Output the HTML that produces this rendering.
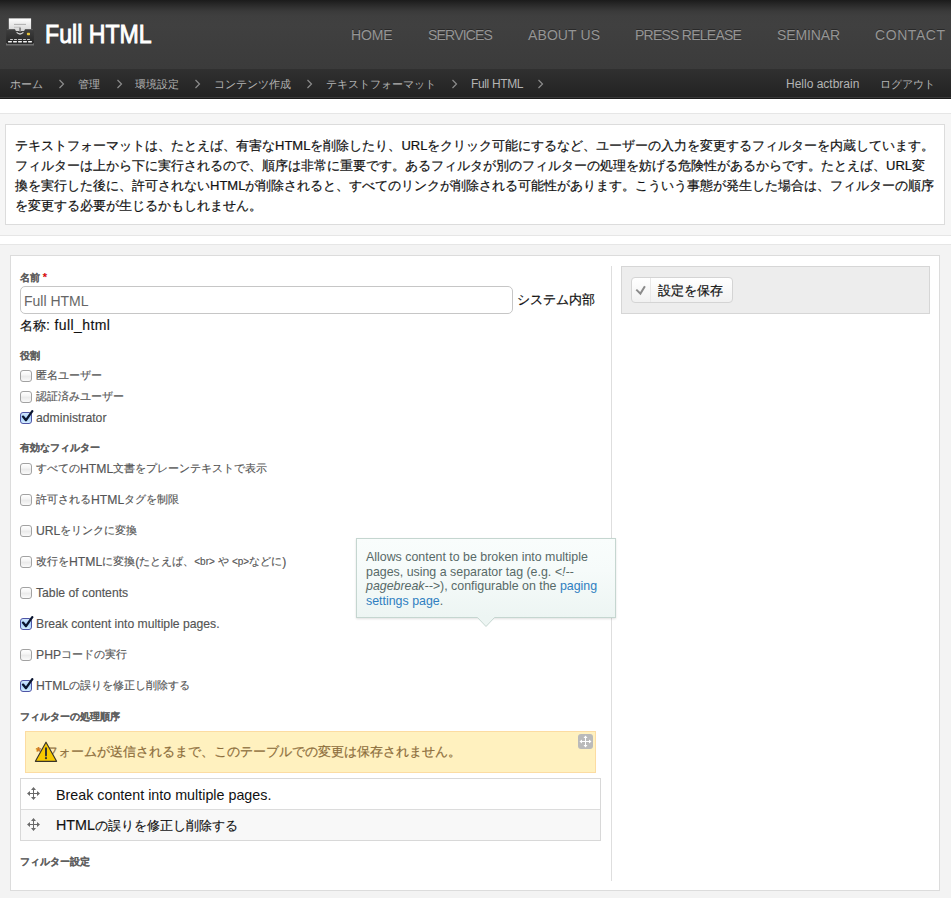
<!DOCTYPE html>
<html><head><meta charset="utf-8">
<style>
*{margin:0;padding:0;box-sizing:border-box}
html,body{width:951px;height:898px;overflow:hidden;background:#fff;font-family:"Liberation Sans",sans-serif}
div,span{white-space:nowrap}
.a{position:absolute}
#hdr{position:absolute;left:0;top:0;width:951px;height:69px;background:linear-gradient(#1b1b1b 0,#2a2a2a 5px,#3a3a3a 11px,#3f3f3f 16px,#404040 25px,#3b3b3b 69px)}
#bc{position:absolute;left:0;top:69px;width:951px;height:30px;background:linear-gradient(#303030 0,#222 28px,#383838 28px,#383838 29px,#1a1a1a 29px,#1a1a1a 30px)}
.nav{position:absolute;top:27px;color:#959595;font-size:14px;line-height:16px;text-shadow:0 -1px 0 rgba(0,0,0,.35)}
.bci{position:absolute;top:77px;color:#b4b4b4;font-size:11px;line-height:14px}
.bcl{position:absolute;top:77px;color:#b4b4b4;font-size:12px;line-height:14px}
.sep{position:absolute;top:79px}
.sec1{position:absolute;left:0;top:113px;width:951px;height:123px;background:#f6f6f6;border-top:1px solid #e6e6e6;border-bottom:1px solid #e6e6e6}
#desc{position:absolute;left:5px;top:124px;width:940px;height:101px;background:#fff;border:1px solid #dcdcdc}
.dl{position:absolute;left:15px;font-size:13px;color:#111;line-height:16px;margin-top:1px;-webkit-text-stroke:0.2px #111}
.sec2{position:absolute;left:0;top:244px;width:951px;height:654px;background:#f3f3f3;border-top:1px solid #e6e6e6}
#form{position:absolute;left:10px;top:255px;width:930px;height:636px;background:#fff;border:1px solid #dcdcdc}
.lbl{position:absolute;left:20px;font-size:10px;font-weight:bold;color:#5f5f5f;line-height:12px;-webkit-text-stroke:0.1px #5f5f5f}
.cb{position:absolute;left:20px;width:12px;height:12px;border:1px solid #a2a2a2;border-radius:3px;background:linear-gradient(#fff 0,#f6f6f6 35%,#ebebeb 55%,#fafafa 100%)}
.ck{position:absolute;left:20px}
.ct{position:absolute;left:36px;font-size:11px;color:#555;line-height:14px;-webkit-text-stroke:0.15px #555}
.l{font-size:12.2px;position:relative;top:1px}
</style></head><body>
<div id="hdr"></div>
<!-- logo -->
<svg class="a" style="left:2px;top:14px" width="36" height="36" viewBox="0 0 36 36">
 <defs><linearGradient id="pg" x1="0" y1="0" x2="0" y2="1"><stop offset="0" stop-color="#fff"/><stop offset="1" stop-color="#d4d4d4"/></linearGradient>
 <linearGradient id="bg" x1="0" y1="0" x2="0" y2="1"><stop offset="0" stop-color="#3e3e3e"/><stop offset="1" stop-color="#262626"/></linearGradient></defs>
 <rect x="6.8" y="4.4" width="22.3" height="12.6" fill="url(#pg)"/>
 <rect x="12" y="9.9" width="12" height="0.9" fill="#a8a8a8"/>
 <rect x="12" y="12.8" width="6.5" height="0.8" fill="#b8b8b8"/>
 <path d="M4.2 16.4 Q4.2 15.2 5.4 15.2 H13 L14.5 18.3 H21.5 L23 15.2 H30.7 Q31.9 15.2 31.9 16.4 V29.7 H4.2 Z" fill="url(#bg)"/>
 <path d="M5 15.6 H12.4 M23.6 15.6 H31" stroke="#5c5c5c" stroke-width="0.9"/>
 <path d="M14.6 18.4 Q18 21.6 21.4 18.4" fill="none" stroke="#d8d8d8" stroke-width="1.3"/>
 <rect x="17.3" y="13.6" width="1.5" height="4.2" fill="#777"/>
 <rect x="24.9" y="18.8" width="3.1" height="2.4" rx="0.6" fill="#e3c23a"/>
 <g fill="#cfcfcf"><rect x="8" y="24.9" width="3" height="1.2" rx=".5"/><rect x="12" y="24.9" width="3" height="1.2" rx=".5"/><rect x="16" y="24.9" width="4" height="1.2" rx=".5"/><rect x="21" y="24.9" width="3" height="1.2" rx=".5"/><rect x="25" y="24.9" width="3" height="1.2" rx=".5"/></g>
 <g fill="#f4f4f4"><rect x="6" y="27" width="4" height="1.4" rx=".6"/><rect x="11" y="27" width="4" height="1.4" rx=".6"/><rect x="16" y="27" width="4" height="1.4" rx=".6"/><rect x="21" y="27" width="4" height="1.4" rx=".6"/><rect x="26" y="27" width="4" height="1.4" rx=".6"/></g>
 <path d="M4 29.2 V31.4 H32 V29.2 H31 V30 H5 V29.2 Z" fill="#6e6e6e"/>
</svg>
<div class="a" style="left:45px;top:19px;font-size:26px;color:#fff;line-height:30px;-webkit-text-stroke:0.9px #fff;transform:scaleX(0.89);transform-origin:0 0">Full HTML</div>
<div class="nav" style="left:351px;letter-spacing:-0.15px">HOME</div>
<div class="nav" style="left:428px;letter-spacing:-0.8px">SERVICES</div>
<div class="nav" style="left:528px;letter-spacing:0.1px">ABOUT US</div>
<div class="nav" style="left:635px;letter-spacing:-0.75px">PRESS RELEASE</div>
<div class="nav" style="left:777px;letter-spacing:-0.13px">SEMINAR</div>
<div class="nav" style="left:875px;letter-spacing:0.57px">CONTACT</div>

<div id="bc"></div>
<div class="bci" style="left:10px">ホーム</div>
<div class="bci" style="left:78px">管理</div>
<div class="bci" style="left:135px">環境設定</div>
<div class="bci" style="left:214px">コンテンツ作成</div>
<div class="bci" style="left:326px">テキストフォーマット</div>
<div class="bcl" style="left:471px;letter-spacing:-0.35px">Full HTML</div>
<div class="bcl" style="left:786px">Hello actbrain</div>
<div class="bci" style="left:880px">ログアウト</div>
<svg class="sep" style="left:0" width="951" height="12" viewBox="0 0 951 12">
 <g fill="none" stroke="#8c8c8c" stroke-width="1.2">
 <path d="M59.5 1 L63.5 5 L59.5 9"/><path d="M117.5 1 L121.5 5 L117.5 9"/><path d="M195.5 1 L199.5 5 L195.5 9"/><path d="M307.5 1 L311.5 5 L307.5 9"/><path d="M452.5 1 L456.5 5 L452.5 9"/><path d="M538.5 1 L542.5 5 L538.5 9"/>
 </g></svg>

<div class="sec1"></div>
<div id="desc"></div>
<div class="dl" style="top:137px">テキストフォーマットは、たとえば、有害なHTMLを削除したり、URLをクリック可能にするなど、ユーザーの入力を変更するフィルターを内蔵しています。</div>
<div class="dl" style="top:157px">フィルターは上から下に実行されるので、順序は非常に重要です。あるフィルタが別のフィルターの処理を妨げる危険性があるからです。たとえば、URL変</div>
<div class="dl" style="top:177px">換を実行した後に、許可されないHTMLが削除されると、すべてのリンクが削除される可能性があります。こういう事態が発生した場合は、フィルターの順序</div>
<div class="dl" style="top:197px">を変更する必要が生じるかもしれません。</div>

<div class="sec2"></div>
<div id="form"></div>
<div class="lbl" style="top:271px">名前 <span style="color:#e00;font-size:11px">*</span></div>
<div class="a" style="left:20px;top:286px;width:493px;height:28px;border:1px solid #c6c6c6;border-radius:5px;background:#fff"></div>
<div class="a" style="left:24px;top:293px;font-size:14px;color:#666;line-height:16px">Full HTML</div>
<div class="a" style="left:517px;top:292px;font-size:13px;color:#111;line-height:16px;-webkit-text-stroke:0.2px #111">システム内部</div>
<div class="a" style="left:20px;top:317px;font-size:13px;color:#111;line-height:16px;-webkit-text-stroke:0.15px #111">名称<span style="font-size:14px;letter-spacing:0.4px">: full_html</span></div>

<div class="lbl" style="top:350px">役割</div>
<div class="cb" style="top:370px"></div><div class="ct" style="top:368px">匿名ユーザー</div>
<div class="cb" style="top:391px"></div><div class="ct" style="top:389px">認証済みユーザー</div>
<svg class="ck" style="top:410px" width="14" height="15" viewBox="0 0 14 15"><use href="#chk"/></svg><div class="ct" style="top:410px"><span class="l">administrator</span></div>

<div class="lbl" style="top:442px">有効なフィルター</div>
<div class="cb" style="top:463px"></div><div class="ct" style="top:461px">すべての<span class="l">HTML</span>文書をプレーンテキストで表示</div>
<div class="cb" style="top:494px"></div><div class="ct" style="top:492px">許可される<span class="l">HTML</span>タグを制限</div>
<div class="cb" style="top:525px"></div><div class="ct" style="top:523px"><span class="l">URL</span>をリンクに変換</div>
<div class="cb" style="top:556px"></div><div class="ct" style="top:554px">改行を<span class="l">HTML</span>に変換<span class="l">(</span>たとえば、<span style="font-size:10px">&lt;br&gt;</span> や <span style="font-size:10px">&lt;p&gt;</span>などに<span class="l">)</span></div>
<div class="cb" style="top:587px"></div><div class="ct" style="top:585px"><span class="l">Table of contents</span></div>
<svg class="ck" style="top:616px" width="14" height="15" viewBox="0 0 14 15"><use href="#chk"/></svg><div class="ct" style="top:616px"><span class="l">Break content into multiple pages.</span></div>
<div class="cb" style="top:649px"></div><div class="ct" style="top:647px"><span class="l">PHP</span>コードの実行</div>
<svg class="ck" style="top:678px" width="14" height="15" viewBox="0 0 14 15"><use href="#chk"/></svg><div class="ct" style="top:678px"><span class="l">HTML</span>の誤りを修正し削除する</div>

<svg width="0" height="0" style="position:absolute">
 <defs>
 <linearGradient id="cbg" x1="0" y1="0" x2="0" y2="1"><stop offset="0" stop-color="#d6e9ff"/><stop offset=".5" stop-color="#a9d3ff"/><stop offset="1" stop-color="#d9f1ff"/></linearGradient>
 <g id="chk">
  <rect x="0.5" y="2.5" width="11" height="11" rx="2.5" fill="url(#cbg)" stroke="#4f55a6" stroke-width="1"/>
  <path d="M3 6.6 L6 10.2 L12.3 1.2" fill="none" stroke="#0b1530" stroke-width="2.3" stroke-linecap="round" stroke-linejoin="round"/>
 </g>
 <g id="drag" fill="#6a6a6a">
  <rect x="6" y="2" width="1" height="9"/><rect x="2" y="6" width="9" height="1"/>
  <path d="M6.5 0 L9 3 H4 Z M6.5 13 L9 10 H4 Z M0 6.5 L3 4 V9 Z M13 6.5 L10 4 V9 Z"/>
 </g>
 </defs>
</svg>

<div class="lbl" style="top:711px">フィルターの処理順序</div>
<div class="a" style="left:25px;top:731px;width:571px;height:42px;background:#fff1bf;border:1px solid #fcdca2"></div>
<div class="a" style="left:36px;top:744px;font-size:13px;color:#8d6e3c;line-height:16px;-webkit-text-stroke:0.2px #8d6e3c"><span style="color:#e07a10;font-weight:bold">*</span> フォームが送信されるまで、このテーブルでの変更は保存されません。</div>
<svg class="a" style="left:34px;top:741px" width="24" height="22" viewBox="0 0 24 22">
 <path d="M12 1.2 L22.6 20.3 H1.4 Z" fill="#f6c800" stroke="#38342a" stroke-width="1.15" stroke-linejoin="round"/>
 <rect x="11" y="6.2" width="2" height="9.3" rx="1" fill="#333"/>
 <circle cx="12" cy="17.2" r="1.1" fill="#333"/>
</svg>
<div class="a" style="left:578px;top:734px;width:15px;height:15px;background:#bababa;border-radius:3px"></div>
<svg class="a" style="left:579px;top:735px" width="13" height="13" viewBox="0 0 13 13"><g fill="#fff">
  <rect x="6" y="2" width="1" height="9"/><rect x="2" y="6" width="9" height="1"/>
  <path d="M6.5 0.5 L8.5 3 H4.5 Z M6.5 12.5 L8.5 10 H4.5 Z M0.5 6.5 L3 4.5 V8.5 Z M12.5 6.5 L10 4.5 V8.5 Z"/></g></svg>

<div class="a" style="left:20px;top:778px;width:581px;height:63px;border:1px solid #d8d8d8;background:#fff"></div>
<div class="a" style="left:21px;top:809px;width:579px;height:31px;background:#f8f8f8;border-top:1px solid #dcdcdc"></div>
<svg class="a" style="left:27px;top:787px" width="13" height="13" viewBox="0 0 13 13"><use href="#drag"/></svg>
<svg class="a" style="left:27px;top:818px" width="13" height="13" viewBox="0 0 13 13"><use href="#drag"/></svg>
<div class="a" style="left:56px;top:787px;font-size:14.3px;color:#111;line-height:16px">Break content into multiple pages.</div>
<div class="a" style="left:56px;top:817px;font-size:13px;color:#111;line-height:16px;-webkit-text-stroke:0.15px #111"><span style="font-size:14.3px">HTML</span>の誤りを修正し削除する</div>

<div class="lbl" style="top:856px">フィルター設定</div>

<div class="a" style="left:611px;top:266px;width:1px;height:615px;background:#dedede"></div>
<div class="a" style="left:621px;top:266px;width:309px;height:48px;background:#ededed;border:1px solid #d6d6d6"></div>
<div class="a" style="left:631px;top:277px;width:102px;height:26px;border:1px solid #d4d4d4;border-radius:4px;background:linear-gradient(#fff,#f1f1f1)"></div>
<div class="a" style="left:650px;top:278px;width:1px;height:24px;background:#e8e8e8"></div>
<svg class="a" style="left:634px;top:284px" width="13" height="12" viewBox="0 0 13 12"><path d="M2.3 5.6 L6.4 9.6 L10.9 2.2" fill="none" stroke="#8a8a8a" stroke-width="2" stroke-linejoin="miter"/></svg>
<div class="a" style="left:658px;top:283px;font-size:13px;color:#111;line-height:16px;-webkit-text-stroke:0.2px #111">設定を保存</div>

<!-- tooltip -->
<div class="a" style="left:356px;top:538px;width:260px;height:80px;background:linear-gradient(#f9fdfc,#f6fbfa 40%,#edf5f3);border:1px solid #c5d6d0;box-shadow:0 1px 2px rgba(0,0,0,.12)"></div>
<svg class="a" style="left:477px;top:617px" width="18" height="11" viewBox="0 0 18 11"><path d="M0 0 L9 9.5 L18 0" fill="#edf5f3" stroke="#c5d6d0" stroke-width="1"/><rect x="0" y="-1" width="18" height="1.2" fill="#edf5f3"/></svg>
<div class="a" style="left:366px;top:550px;font-size:12.4px;color:#586a68;line-height:14.6px">Allows content to be broken into multiple<br>pages, using a separator tag (e.g. <i>&lt;!--</i><br><i>pagebreak--&gt;</i>), configurable on the <span style="color:#2f7fc1">paging</span><br><span style="color:#2f7fc1">settings page</span>.</div>
</body></html>
